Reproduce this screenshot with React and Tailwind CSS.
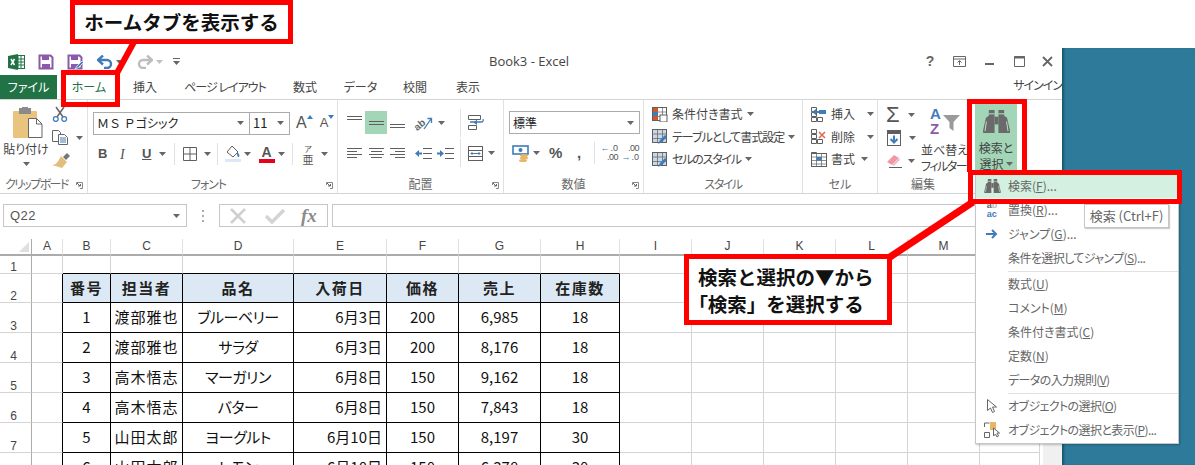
import React from 'react';

const GRAY = '#5f5f5f';
const BLUE = '#3f7cb8';

function Caret({ className = '' }) {
  return (
    <svg width="7" height="4" viewBox="0 0 7 4" className={`shrink-0 ${className}`}>
      <path d="M0 0h7L3.5 4z" fill="#666" />
    </svg>
  );
}

// ---- quick access + window icons
function ExcelLogo() {
  return (
    <svg width="17" height="16" viewBox="0 0 17 16">
      <rect x="7" y="1.5" width="9.5" height="13" fill="#fff" stroke="#217346" />
      <path d="M10 1.5v13M13 1.5v13M7 5h9.5M7 8h9.5M7 11h9.5" stroke="#217346" />
      <path d="M0 2l10-2v16L0 14z" fill="#217346" />
      <path d="M3 5l3.5 6M6.5 5L3 11" stroke="#fff" strokeWidth="1.5" />
    </svg>
  );
}

function SaveIcon({ pen }) {
  return (
    <svg width="16" height="16" viewBox="0 0 16 16">
      <path d="M1.5 1.5h11l2 2v11h-13z" fill="#fff" stroke="#8b5aa8" strokeWidth="2" />
      <rect x="4" y="2" width="7" height="4" fill="#8b5aa8" />
      <rect x="4" y="10" width="8" height="4" fill="#8b5aa8" />
      {pen && <path d="M8 15l2-3 5-5 1.5 1.5-5 5z" fill={BLUE} stroke="#fff" strokeWidth=".7" />}
    </svg>
  );
}

function UndoIcon({ color, flip }) {
  return (
    <svg width="16" height="14" viewBox="0 0 16 14" className={flip ? '-scale-x-100' : ''}>
      <path d="M2 5h8a4 4 0 0 1 0 8H7" fill="none" stroke={color} strokeWidth="2.4" />
      <path d="M6 0.5L1 5l5 4.5" fill="none" stroke={color} strokeWidth="2.4" />
    </svg>
  );
}

// ---- clipboard
function PasteIcon() {
  return (
    <svg width="30" height="31" viewBox="0 0 30 31" className="ml-[4px] shrink-0">
      <rect x="0" y="4" width="24" height="27" rx="1" fill="#e9c47f" />
      <rect x="6" y="1" width="12" height="6" fill="#8a8a8a" />
      <rect x="9" y="0" width="6" height="3" fill="#8a8a8a" />
      <path d="M15.5 11.5h8l5.5 5.5v13.5h-13.5z" fill="#fff" stroke="#666" />
      <path d="M23.5 11.5v5.5h5.5" fill="none" stroke="#666" />
    </svg>
  );
}

function ScissorsIcon() {
  return (
    <svg width="16" height="16" viewBox="0 0 16 16" className="shrink-0">
      <path d="M4 1l7 10M12 1L5 11" stroke="#666" strokeWidth="1.5" />
      <circle cx="3.8" cy="13" r="2.4" fill="none" stroke={BLUE} strokeWidth="1.3" />
      <circle cx="12.2" cy="13" r="2.4" fill="none" stroke={BLUE} strokeWidth="1.3" />
    </svg>
  );
}

function CopyIcon() {
  return (
    <svg width="16" height="15" viewBox="0 0 16 15" className="shrink-0">
      <path d="M.5.5h6l2 2v9H.5z" fill="#fff" stroke="#666" />
      <path d="M6.5 4.5h6l3 3v7h-9z" fill="#fff" stroke="#666" />
      <path d="M8 8h6M8 10h6M8 12h6" stroke={BLUE} />
    </svg>
  );
}

function BrushIcon() {
  return (
    <svg width="18" height="15" viewBox="0 0 18 15" className="shrink-0">
      <path d="M11 4l4-4 3 3-4 4z" fill="#777" />
      <path d="M9 3l6 6-5 6-10-3c4 0 6-3 9-9z" fill="#e3bd7c" />
    </svg>
  );
}

// ---- alignment
function Lines({ rows, w = 15, h = 13 }) {
  return (
    <svg width={w} height={h} viewBox={`0 0 ${w} ${h}`} className="shrink-0">
      {rows.map(([x, y, len, color]) => (
        <path key={`${x}-${y}`} d={`M${x} ${y + 0.5}h${len}`} stroke={color || GRAY} />
      ))}
    </svg>
  );
}

const alignLeft = [[0, 1, 15], [0, 4, 10], [0, 7, 15], [0, 10, 10]];
const alignCenter = [[0, 1, 15], [2, 4, 11], [0, 7, 15], [2, 10, 11]];
const alignRight = [[0, 1, 15], [5, 4, 10], [0, 7, 15], [5, 10, 10]];

function IndentIcon({ out }) {
  return (
    <svg width="17" height="11" viewBox="0 0 17 11" className="shrink-0">
      <path d="M8 .5h9M8 5.500h9M8 10.500h9" stroke={GRAY} />
      {out ? (
        <path d="M0 5.500L4 2v2.500h3v2H4V9z" fill={BLUE} />
      ) : (
        <path d="M7 5.500L3 2v2.500H0v2h3V9z" fill={BLUE} />
      )}
    </svg>
  );
}

function OrientIcon() {
  return (
    <svg width="18" height="16" viewBox="0 0 18 16" className="shrink-0 overflow-visible">
      <text x="-1" y="13" fontSize="10" fontWeight="700" fill="#666" transform="rotate(-40 5 10)" fontFamily="'Liberation Sans', sans-serif">ab</text>
      <path d="M9 14L16 4M12.500 3.500H16.500V8" fill="none" stroke={BLUE} strokeWidth="1.300" />
    </svg>
  );
}

function WrapIcon() {
  return (
    <svg width="17" height="15" viewBox="0 0 17 15" className="shrink-0">
      <path d="M.5.500h12v4H.5zM.5 10.500h8v4H.500z" fill="#fff" stroke={GRAY} />
      <path d="M2 7h11a2 2 0 0 0 2-3" fill="none" stroke={BLUE} strokeWidth="1.300" />
      <path d="M9 4.500L5.500 7.500 9 10z" fill={BLUE} />
    </svg>
  );
}

function MergeIcon() {
  return (
    <svg width="15" height="15" viewBox="0 0 15 15" className="shrink-0">
      <rect x=".5" y=".5" width="14" height="14" fill="#fff" stroke={GRAY} />
      <path d="M.5 4.500h14M.5 10.500h14" stroke={GRAY} />
      <path d="M3 7.500h9M4.500 6L3 7.500 4.500 9M10.500 6L12 7.500 10.500 9" fill="none" stroke={BLUE} />
    </svg>
  );
}

// ---- number
function CurrencyIcon() {
  return (
    <svg width="17" height="17" viewBox="0 0 17 17" className="shrink-0">
      <rect x="1" y="1" width="15" height="8" fill="#fff" stroke={BLUE} strokeWidth="1.600" />
      <circle cx="8.500" cy="5" r="2" fill={BLUE} />
      <ellipse cx="12" cy="10.500" rx="4" ry="1.500" fill="#e9b566" />
      <ellipse cx="12" cy="13" rx="4" ry="1.500" fill="#e9b566" />
      <ellipse cx="11" cy="15.500" rx="4" ry="1.500" fill="#e9b566" />
    </svg>
  );
}

function DecimalIcon({ more }) {
  return (
    <div className="w-[16px] text-[9px] leading-[9px] font-['Liberation_Sans',sans-serif] text-[#555]">
      {more ? (
        <>
          <div className="text-right tracking-[-0.5px]">.00</div>
          <div className="flex items-center justify-end gap-[1px]"><span className="text-[#3f7cb8] font-bold">→</span><span>.0</span></div>
        </>
      ) : (
        <>
          <div className="flex items-center justify-end gap-[1px]"><span className="text-[#3f7cb8] font-bold">←</span><span>.0</span></div>
          <div className="text-right tracking-[-0.5px]">.00</div>
        </>
      )}
    </div>
  );
}

// ---- styles
function StyleIcon({ kind }) {
  return (
    <svg width="16" height="15" viewBox="0 0 16 15" className="shrink-0">
      <rect x=".5" y=".5" width="14" height="13" fill={kind === 'cond' ? '#fff' : '#c9d6e6'} stroke={GRAY} />
      <path d="M5.500.5v13M10.500.5v13M.5 5h14M.5 9.500h14" stroke={GRAY} strokeWidth=".7" />
      {kind === 'cond' && <path d="M1 1h5v4H1z" fill="#d0562c" />}
      {kind === 'cond' && <path d="M1 9h5v4H1z" fill="#d0562c" />}
      {kind === 'cond' && <path d="M1 5h5v4H1z" fill={BLUE} />}
      {kind === 'cond' && <rect x="8" y="8" width="7" height="7" fill="#fff" stroke={GRAY} />}
      {kind !== 'cond' && <path d="M6 15l2-4 5-5 2 2-5 5z" fill={BLUE} />}
    </svg>
  );
}

// ---- cells
function CellsIcon({ kind }) {
  return (
    <svg width="16" height="15" viewBox="0 0 16 15" className="shrink-0">
      <path d="M.5.500h5v4h-5zM.5 5.500h5v4h-5zM.5 10.500h5v4h-5zM6.500 10.500h5v4h-5z" fill="#fff" stroke={GRAY} />
      {kind === 'ins' && <path d="M1 5l4-3v2h3V3h7v4H8V6H5v2z" fill={BLUE} />}
      {kind === 'del' && <path d="M8 3l6 6M14 3L8 9" stroke="#e0664d" strokeWidth="1.500" />}
      {kind === 'fmt' && (
        <>
          <rect x=".5" y="1.500" width="15" height="13" fill="#fff" stroke={GRAY} />
          <path d="M.5 5h15M.5 8.500h15M.5 12h15M5.500 1.500v13M10.500 1.500v13" stroke={GRAY} strokeWidth=".7" />
          <rect x="5.500" y="5" width="5" height="3.500" fill={BLUE} />
        </>
      )}
    </svg>
  );
}

function FillIcon() {
  return (
    <svg width="14" height="16" viewBox="0 0 14 16" className="shrink-0">
      <rect x=".5" y=".5" width="13" height="15" fill="#fff" stroke={GRAY} />
      <rect x="1" y="1" width="12" height="3" fill={GRAY} />
      <path d="M7 5.500v7M3.500 9L7 12.500 10.500 9" fill="none" stroke={BLUE} strokeWidth="2" />
    </svg>
  );
}

function EraserIcon() {
  return (
    <svg width="15" height="14" viewBox="0 0 15 14" className="shrink-0">
      <path d="M0 8l7-7 5 3-7 7z" fill="#ee9aa6" />
      <path d="M5 11l7-7 1 2-6 6z" fill="#f3bfc6" />
      <path d="M2 13.500h13" stroke={GRAY} />
    </svg>
  );
}

function SortIcon() {
  return (
    <svg width="31" height="28" viewBox="0 0 31 28" className="shrink-0 overflow-visible">
      <text x="0" y="12" fontSize="15" fontWeight="700" fill={BLUE} fontFamily="'Liberation Sans', sans-serif">A</text>
      <text x="0" y="27" fontSize="15" fontWeight="700" fill="#8b5aa8" fontFamily="'Liberation Sans', sans-serif">Z</text>
      <path d="M13 8h17l-6.500 7v9l-4-3v-6z" fill="#9a9a9a" />
    </svg>
  );
}

// two barrels joined by a short bridge
function Binoculars({ w, h, light = '#c3e2cf' }) {
  return (
    <svg width={w} height={h} viewBox="0 0 28 24" className="shrink-0">
      <path d="M6 0h6v6l0 18H0V21L3 8l3-2zM16 0h6v6l3 2 3 13v3H16z" fill="#6a6a6a" />
      <rect x="12" y="7" width="4" height="8" fill="#6a6a6a" />
      <path d="M3.500 12L2 22M24.500 12L26 22M6 4h6M16 4h6" stroke={light} strokeWidth="1" />
    </svg>
  );
}

// ---- formula bar
function FxButtons() {
  return (
    <div className="ml-[15px] w-[109px] h-[23px] border border-[#c6c6c6] flex items-center pl-[9px]">
      <svg width="18" height="16" viewBox="0 0 18 16" className="shrink-0">
        <path d="M2 1l14 14M16 1L2 15" stroke="#cfcfcf" strokeWidth="2.500" />
      </svg>
      <svg width="20" height="16" viewBox="0 0 20 16" className="ml-[18px] shrink-0">
        <path d="M1 8l6 6L19 2" fill="none" stroke="#d4d4d4" strokeWidth="3.500" />
      </svg>
      <span className="ml-[16px] text-[19px] leading-none italic font-bold text-[#8c8c8c] font-['Liberation_Serif',serif]">fx</span>
    </div>
  );
}

function Launcher() {
  return (
    <svg width="7" height="7" viewBox="0 0 7 7" className="shrink-0">
      <path d="M.5 3V.5h6v6H4" fill="none" stroke="#888" />
      <path d="M1 1l3 3M2 4h2.500V2" fill="none" stroke="#666" />
    </svg>
  );
}

function Group({ label, launcher, className, labelClass = 'justify-center', children }) {
  return (
    <div className={`relative shrink-0 h-[93px] flex flex-col ${className}`}>
      <div className="flex-1 min-h-0">{children}</div>
      <div className={`h-[18px] flex items-center text-[12px] leading-none text-[#6a6a6a] pb-[1px] whitespace-nowrap ${labelClass}`}>
        {label}
        {launcher && <span className="absolute right-[4px] bottom-[4px] flex"><Launcher /></span>}
      </div>
    </div>
  );
}

function StyleRow({ icon, text, tight = '' }) {
  return (
    <div className="h-[22.5px] flex items-center gap-[4px] text-[12px] text-[#444] whitespace-nowrap">
      {icon}
      <span className={tight}>{text}</span>
      <Caret />
    </div>
  );
}

function Ribbon() {
  return (
    <div className="h-[94px] border-b border-[#d4d4d4] flex text-[#444] [font-feature-settings:'palt']">
      {/* クリップボード */}
      <Group label="クリップボード" launcher labelClass="pl-[5px] tracking-[-1.6px]" className="w-[88px] border-r border-[#e1e1e1]">
        <div className="flex">
          <div className="w-[52px] shrink-0 flex flex-col items-center pt-[7px]">
            <PasteIcon />
            <div className="text-[12px] leading-[16px] mt-[3px] whitespace-nowrap">貼り付け</div>
            <Caret className="mt-[5px]" />
          </div>
          <div className="flex flex-col pt-[6px] gap-[8px]">
            <ScissorsIcon />
            <div className="flex items-center gap-[8px]"><CopyIcon /><Caret /></div>
            <BrushIcon />
          </div>
        </div>
      </Group>

      {/* フォント */}
      <Group label="フォント" launcher labelClass="justify-center tracking-[-1px] pr-[8px]" className="w-[250px] border-r border-[#e1e1e1]">
        <div className="pl-[5px] pt-[11px]">
          <div className="flex items-center">
            <div className="w-[157px] h-[23px] border border-[#ababab] flex items-center justify-between pl-[3px] pr-[5px] text-[12px] text-[#222]">
              <span><span className="[font-feature-settings:normal]">ＭＳ Ｐ</span>ゴシック</span>
              <Caret />
            </div>
            <div className="w-[40px] h-[23px] border border-l-0 border-[#ababab] flex items-center justify-between pl-[3px] pr-[5px] text-[13px] text-[#222]">
              <span>11</span>
              <Caret />
            </div>
            <span className="ml-[6px] text-[16px] font-['Liberation_Sans',sans-serif] text-[#555]">A</span>
            <svg width="6" height="4" viewBox="0 0 6 4" className="-mt-[12px]"><path d="M0 4l3-4 3 4z" fill={BLUE} /></svg>
            <span className="ml-[7px] text-[13px] font-['Liberation_Sans',sans-serif] text-[#555]">A</span>
            <svg width="6" height="4" viewBox="0 0 6 4" className="-mt-[12px]"><path d="M0 0l3 4 3-4z" fill={BLUE} /></svg>
          </div>
          <div className="flex items-center h-[24px] mt-[7px] pl-[5px] text-[#555] font-['Liberation_Sans',sans-serif]">
            <span className="w-[22px] text-[13px] font-bold">B</span>
            <span className="w-[22px] text-[14px] italic font-['Liberation_Serif',serif]">I</span>
            <span className="w-[17px] text-[13px] font-bold underline">U</span>
            <Caret />
            <div className="ml-[8px] mr-[8px] w-px h-[22px] bg-[#e1e1e1]" />
            <svg width="14" height="14" viewBox="0 0 14 14" className="shrink-0"><path d="M.5.500h13v13H.5zM7 .5v13M.5 7h13" fill="none" stroke={GRAY} /></svg>
            <Caret className="ml-[7px]" />
            <div className="ml-[6px] mr-[7px] w-px h-[22px] bg-[#e1e1e1]" />
            <svg width="16" height="16" viewBox="0 0 16 16" className="shrink-0">
              <path d="M7 0l6 6-5 5-6-5z" fill="#fff" stroke={GRAY} />
              <path d="M12 6c2 2 3 3 2 5-2 0-2-2-2-5z" fill={BLUE} />
              <rect x="0" y="13" width="16" height="3" fill="#dbe8f5" />
            </svg>
            <Caret className="ml-[3px]" />
            <div className="w-[17px] ml-[7px] flex flex-col items-center">
              <span className="text-[14px] leading-[13px] font-bold text-[#555]">A</span>
              <div className="w-[16px] h-[4px] bg-[#e8001c]" />
            </div>
            <Caret className="ml-[3px]" />
            <div className="ml-[7px] mr-[8px] w-px h-[22px] bg-[#e1e1e1]" />
            <div className="w-[14px] flex flex-col items-center text-[8px] leading-[9px] font-['Noto_Sans_CJK_JP',sans-serif] text-[#555]">
              <span>ア</span>
              <span className="text-[11px] leading-[12px]">亜</span>
            </div>
            <Caret className="ml-[6px]" />
          </div>
        </div>
      </Group>

      {/* 配置 */}
      <Group label="配置" launcher className="w-[166px] border-r border-[#e1e1e1]">
        <div className="pl-[9px] pt-[11px]">
          <div className="flex items-center h-[23px]">
            <div className="w-[15px] -mt-[9px] flex"><Lines rows={[[0, 1, 15], [0, 4, 15]]} h={7} /></div>
            <div className="w-[22px] h-[23px] ml-[3px] bg-[#a3d5b7] flex items-center justify-center"><Lines rows={[[0, 3, 15], [0, 6, 15]]} h={10} /></div>
            <div className="w-[15px] ml-[3px] mt-[8px] flex"><Lines rows={[[0, 1, 15], [0, 4, 15]]} h={7} /></div>
            <div className="ml-[10px] flex items-center gap-[5px]"><OrientIcon /><Caret /></div>
            <div className="ml-[15px] w-px h-[28px] bg-[#e1e1e1]" />
            <div className="ml-[7px] flex"><WrapIcon /></div>
          </div>
          <div className="flex items-center h-[24px] mt-[7px]">
            <Lines rows={alignLeft} />
            <div className="ml-[7px] flex"><Lines rows={alignCenter} /></div>
            <div className="ml-[6px] flex"><Lines rows={alignRight} /></div>
            <div className="ml-[10px] flex"><IndentIcon out /></div>
            <div className="ml-[5px] flex"><IndentIcon /></div>
            <div className="ml-[6px] w-px h-[28px] bg-[#e1e1e1]" />
            <div className="ml-[7px] flex"><MergeIcon /></div>
            <Caret className="ml-[5px]" />
          </div>
        </div>
      </Group>

      {/* 数値 */}
      <Group label="数値" launcher className="w-[140px] border-r border-[#e1e1e1]">
        <div className="pl-[5px] pt-[11px]">
          <div className="w-[131px] h-[23px] border border-[#ababab] flex items-center justify-between pl-[3px] pr-[5px] text-[12px] text-[#222]">
            <span>標準</span>
            <Caret />
          </div>
          <div className="flex items-center h-[24px] mt-[7px] pl-[3px]">
            <CurrencyIcon />
            <Caret className="ml-[4px]" />
            <span className="ml-[9px] w-[15px] text-[15px] font-bold font-['Liberation_Sans',sans-serif] text-[#555]">%</span>
            <span className="ml-[13px] w-[6px] text-[15px] font-bold font-['Liberation_Sans',sans-serif] text-[#555]">,</span>
            <div className="ml-[11px] w-px h-[22px] bg-[#e1e1e1]" />
            <div className="ml-[7px] flex"><DecimalIcon /></div>
            <div className="ml-[5px] flex"><DecimalIcon more /></div>
          </div>
        </div>
      </Group>

      {/* スタイル */}
      <Group label="スタイル" labelClass="justify-center tracking-[-1.5px]" className="w-[159px] border-r border-[#e1e1e1]">
        <div className="pl-[8px] pt-[3px]">
          <StyleRow icon={<StyleIcon kind="cond" />} text="条件付き書式" />
          <StyleRow icon={<StyleIcon />} text="テーブルとして書式設定" tight="tracking-[-1px]" />
          <StyleRow icon={<StyleIcon />} text="セルのスタイル" tight="tracking-[-1.2px]" />
        </div>
      </Group>

      {/* セル */}
      <Group label="セル" className="w-[75px] border-r border-[#e1e1e1]">
        <div className="pl-[8px] pt-[3px]">
          <StyleRow icon={<CellsIcon kind="ins" />} text={<span className="inline-block w-[32px]">挿入</span>} />
          <StyleRow icon={<CellsIcon kind="del" />} text={<span className="inline-block w-[32px]">削除</span>} />
          <StyleRow icon={<CellsIcon kind="fmt" />} text={<span className="inline-block w-[26px]">書式</span>} />
        </div>
      </Group>

      {/* 編集 */}
      <Group label="編集" className="w-[92px] pr-[2px]">
        <div className="flex pl-[8px] pt-[3px]">
          <div className="w-[34px] shrink-0">
            <div className="h-[23px] flex items-center gap-[5px]">
              <span className="w-[17px] text-[22px] leading-none font-['Liberation_Sans',sans-serif] text-[#555]">Σ</span>
              <Caret />
            </div>
            <div className="h-[23px] flex items-center gap-[8px] pl-[1px]"><FillIcon /><Caret /></div>
            <div className="h-[23px] flex items-center gap-[6px] pl-[1px]"><EraserIcon /><Caret /></div>
          </div>
          <div className="w-[50px] flex flex-col items-start overflow-hidden whitespace-nowrap text-[12px] leading-[16px] pl-[1px]">
            <div className="mt-[4px] ml-[9px] flex"><SortIcon /></div>
            <div className="mt-[7px]">並べ替えと</div>
            <div className="tracking-[-1.5px]">フィルター</div>
          </div>
        </div>
      </Group>

      {/* 検索と選択 */}
      <div className="ml-[5px] w-[42px] h-[72px] bg-[#a3d5b7] flex flex-col items-center pt-[10px] text-[12px] leading-[16px] whitespace-nowrap">
        <Binoculars w={27} h={23} />
        <div className="mt-[7px]">検索と</div>
        <div className="flex items-center gap-[2px]">選択<Caret /></div>
      </div>
    </div>
  );
}

const COLS = ['A', 'B', 'C', 'D', 'E', 'F', 'G', 'H', 'I', 'J', 'K', 'L', 'M', 'N'];

const TABLE = [
  ['番号', '担当者', '品名', '入荷日', '価格', '売上', '在庫数'],
  ['1', '渡部雅也', 'ブルーベリー', '6月3日', '200', '6,985', '18'],
  ['2', '渡部雅也', 'サラダ', '6月3日', '200', '8,176', '18'],
  ['3', '高木悟志', 'マーガリン', '6月8日', '150', '9,162', '18'],
  ['4', '高木悟志', 'バター', '6月8日', '150', '7,843', '18'],
  ['5', '山田太郎', 'ヨーグルト', '6月10日', '150', '8,197', '30'],
  ['6', '山田太郎', 'レモン', '6月10日', '150', '6,378', '30'],
];

function Sheet() {
  const rows = [1, 2, 3, 4, 5, 6, 7, 8, 9];
  return (
    <div className="flex flex-1 min-h-0 overflow-hidden">
      <div className="w-[1040px] shrink-0 grid grid-cols-[32px_31px_48px_72px_111px_93px_72px_82px_79px_72px_72px_72px_72px_72px_60px] grid-rows-[17px_18px_29px_30px_30px_30px_30px_30px_30px] text-[#222]">
        {/* 列見出し */}
        <div className="border-r border-b-2 border-r-[#ababab] border-b-[#ababab] flex items-end justify-end pr-[2px] pb-[2px]">
          <svg width="10" height="10" viewBox="0 0 10 10"><path d="M10 0v10H0z" fill="#dfdfdf" /></svg>
        </div>
        {COLS.map(c => (
          <div key={c} className="border-r border-b-2 border-r-[#e1e1e1] border-b-[#ababab] flex items-center justify-center pb-[1px] text-[12px] leading-none text-[#444] font-['Liberation_Sans',sans-serif]">
            {c}
          </div>
        ))}

        {rows.map(r => {
          const data = TABLE[r - 2];
          return (
            <React.Fragment key={r}>
              <div className="border-r border-b border-r-[#ababab] border-b-[#d4d4d4] flex items-end justify-center pr-[4px] text-[12px] leading-[12px] text-[#444] font-['Liberation_Sans',sans-serif]">
                {r}
              </div>
              {COLS.map((c, i) => {
                const cellData = data && i >= 1 && i <= 7 ? data[i - 1] : null;
                if (cellData !== null) {
                  const isHead = r === 2;
                  const isDate = i === 4 && !isHead;
                  return (
                    <div
                      key={c}
                      className={`border-r border-b border-black flex items-center pb-[2px] text-[15px] leading-none whitespace-nowrap ${isHead ? 'bg-[#dce9f5] font-bold tracking-[1.5px] justify-center' : 'text-[#111]'} ${isDate ? 'justify-end pr-[4px]' : 'justify-center'} ${!isHead && i === 2 ? 'tracking-[1px]' : ''} ${!isHead && i === 3 ? "tracking-[-0.5px] [font-feature-settings:'palt']" : ''}`}
                    >
                      {cellData}
                    </div>
                  );
                }
                if (i === 0 && data) {
                  return <div key={c} className="border-r border-b border-r-black border-b-[#d4d4d4]" />;
                }
                if (r === 1 && i >= 1 && i <= 7) {
                  return <div key={c} className="border-r border-b border-r-[#d4d4d4] border-b-black" />;
                }
                return <div key={c} className="border-r border-b border-[#d4d4d4]" />;
              })}
            </React.Fragment>
          );
        })}
      </div>
      <div className="flex-1 bg-[#f0f0f0] ml-[3px]" />
    </div>
  );
}

function MenuItem({ icon, children, active, tight }) {
  return (
    <div className={`h-[24px] flex items-center text-[12px] text-[#666] whitespace-nowrap ${active ? 'bg-[#d3f0e0]' : ''}`}>
      <div className="w-[32px] shrink-0 flex items-center justify-center">{icon}</div>
      <span className={tight ? 'tracking-[-0.6px]' : ''}>{children}</span>
    </div>
  );
}

function FindMenu() {
  return (
    <div className="absolute left-[975px] top-[172px] w-[204px] h-[272px] bg-white border border-[#c6c6c6] shadow-[1px_1px_2px_rgba(0,0,0,0.25)] pt-[1px] [font-feature-settings:'palt']">
      <MenuItem active icon={<Binoculars w={17} h={14} light="#d3f0e0" />}>検索(<u>F</u>)...</MenuItem>
      <MenuItem icon={
        <div className="text-[9px] leading-[9px] font-bold font-['Liberation_Sans',sans-serif] text-[#3f7cb8]">
          <div className="text-[#666]">a<span className="text-[#bbb]">b</span></div>
          <div>ac</div>
        </div>
      }>置換(<u>R</u>)...</MenuItem>
      <MenuItem icon={<svg width="12" height="10" viewBox="0 0 12 10"><path d="M0 5h10M6 1l4 4-4 4" fill="none" stroke={BLUE} strokeWidth="2" /></svg>}>ジャンプ(<u>G</u>)...</MenuItem>
      <MenuItem tight>条件を選択してジャンプ(<u>S</u>)...</MenuItem>
      <div className="ml-[32px] h-[1px] my-[0.5px] bg-[#e1e1e1]" />
      <MenuItem>数式(<u>U</u>)</MenuItem>
      <MenuItem>コメント(<u>M</u>)</MenuItem>
      <MenuItem>条件付き書式(<u>C</u>)</MenuItem>
      <MenuItem>定数(<u>N</u>)</MenuItem>
      <MenuItem tight>データの入力規則(<u>V</u>)</MenuItem>
      <div className="ml-[32px] h-[1px] my-[0.5px] bg-[#e1e1e1]" />
      <MenuItem tight icon={<svg width="10" height="14" viewBox="0 0 10 14"><path d="M.5.500v11l3-2.500 2 4.500 2-1-2-4.500h4z" fill="#fff" stroke="#666" /></svg>}>オブジェクトの選択(<u>O</u>)</MenuItem>
      <MenuItem tight icon={
        <svg width="16" height="16" viewBox="0 0 16 16">
          <path d="M.5 1h5M.5 1v4M.5 10.500h5v5h-5z" fill="none" stroke="#666" />
          <rect x="6" y="0" width="6" height="8" fill="#e9b566" />
          <path d="M9.500 6v8l2-2 1.500 3 1.500-1-1.500-3h2.500z" fill="#fff" stroke="#666" />
        </svg>
      }>オブジェクトの選択と表示(<u>P</u>)...</MenuItem>
    </div>
  );
}

export default function App() {
  return (
    <div className="relative w-[1195px] h-[465px] overflow-hidden bg-white font-['Noto_Sans_CJK_JP',sans-serif]">
      <div className="flex h-[465px] pt-[48px]">
        <div className="w-[1062px] shrink-0 flex flex-col">
          {/* タイトルバー */}
          <div className="h-[27px] shrink-0 flex items-center relative">
            <div className="w-[489px] shrink-0 flex items-center pl-[8px]">
              <ExcelLogo />
              <div className="ml-[13px] flex"><SaveIcon /></div>
              <div className="ml-[13px] flex"><SaveIcon pen /></div>
              <div className="ml-[14px] flex"><UndoIcon color={BLUE} /></div>
              <Caret className="ml-[3px]" />
              <div className="ml-[14px] flex"><UndoIcon color="#bdbdbd" flip /></div>
              <Caret className="ml-[3px] opacity-40" />
              <svg width="7" height="7" viewBox="0 0 7 7" className="ml-[10px]"><path d="M0 .5h7" stroke="#666" /><path d="M0 3h7L3.500 7z" fill="#666" /></svg>
            </div>
            <span className="flex-1 text-[13px] text-[#444] font-['Open_Sans',sans-serif]">Book3 - Excel</span>
            <div className="flex items-center text-[#666]">
              <span className="w-[30px] text-center text-[14px] font-bold font-['Liberation_Sans',sans-serif]">?</span>
              <svg width="30" height="11" viewBox="0 0 30 11"><path d="M8.500.5h12v10h-12zM8.500 3h12M14.500 9V5M12.500 6.500l2-2 2 2" fill="none" stroke="#666" /></svg>
              <svg width="30" height="11" viewBox="0 0 30 11"><path d="M10 8h9" stroke="#666" strokeWidth="2" /></svg>
              <svg width="28" height="11" viewBox="0 0 28 11"><path d="M9.500.500h10v10h-10z" fill="none" stroke="#666" /><path d="M9 1.500h11" stroke="#666" strokeWidth="2" /></svg>
              <svg width="28" height="11" viewBox="0 0 28 11" className="mr-[1px]"><path d="M10 1l9 9M19 1l-9 9" stroke="#666" strokeWidth="1.800" /></svg>
            </div>
          </div>

          {/* タブ */}
          <div className="h-[25px] shrink-0 border-b border-[#d4d4d4] flex text-[12px] text-[#444] whitespace-nowrap [font-feature-settings:'palt']">
            <div className="w-[57px] bg-[#217346] text-white flex items-center justify-center">ファイル</div>
            <div className="w-[64px] text-[#217346] flex items-center justify-center">ホーム</div>
            <div className="w-[48px] flex items-center justify-center">挿入</div>
            <div className="w-[112px] flex items-center justify-center tracking-[-1px]">ページ レイアウト</div>
            <div className="w-[48px] flex items-center justify-center">数式</div>
            <div className="w-[63px] flex items-center justify-center">データ</div>
            <div className="w-[46px] flex items-center justify-center">校閲</div>
            <div className="w-[60px] flex items-center justify-center">表示</div>
            <div className="flex-1 flex items-center justify-end overflow-hidden -mt-[4px] tracking-[-1px]">サインイン</div>
          </div>

          <Ribbon />

          {/* 数式バー */}
          <div className="h-[45px] shrink-0 flex items-start pt-[10px] pl-[3px]">
            <div className="w-[184px] h-[23px] border border-[#c6c6c6] flex items-center justify-between pl-[6px] pr-[6px] text-[13px] text-[#555] font-['Liberation_Sans',sans-serif] tracking-[0.5px]">
              Q22
              <Caret />
            </div>
            <div className="ml-[15px] h-[23px] flex flex-col justify-center gap-[3px]">
              <span className="w-[2px] h-[2px] bg-[#aaa]" />
              <span className="w-[2px] h-[2px] bg-[#aaa]" />
              <span className="w-[2px] h-[2px] bg-[#aaa]" />
            </div>
            <FxButtons />
            <div className="ml-[4px] w-[709px] h-[23px] border border-[#c6c6c6]" />
          </div>

          <Sheet />
        </div>
        <div className="flex-1 bg-[#2d7a9a] shadow-[inset_3px_0_2px_-1px_rgba(0,60,60,0.5)]" />
      </div>

      <FindMenu />

      {/* ツールチップ */}
      <div className="absolute left-[1084px] top-[204px] w-[85px] h-[24px] bg-white border border-[#c6c6c6] shadow-[1px_1px_1px_rgba(0,0,0,0.2)] flex items-center justify-center text-[13px] text-[#666] whitespace-nowrap [font-feature-settings:'palt']">
        検索 (Ctrl+F)
      </div>

      {/* 注釈 */}
      <svg width="1195" height="465" viewBox="0 0 1195 465" className="absolute inset-0 pointer-events-none">
        <path d="M134 42L117 73" stroke="#ff0000" strokeWidth="6" />
        <path d="M890 257L973 202" stroke="#ff0000" strokeWidth="7" />
      </svg>
      <div className="absolute left-[70px] top-0 w-[223px] h-[44px] border-[5px] border-[#ff0000] bg-white flex items-center justify-center text-[19.5px] font-bold text-[#111] whitespace-nowrap">
        ホームタブを表示する
      </div>
      <div className="absolute left-[61px] top-[70px] w-[59px] h-[37px] border-[5px] border-[#ff0000]" />
      <div className="absolute left-[967px] top-[99px] w-[60px] h-[73px] border-[5px] border-b-0 border-[#ff0000]" />
      <div className="absolute left-[968px] top-[170px] w-[214px] h-[34px] border-[5px] border-[#ff0000]" />
      <div className="absolute left-[684px] top-[254px] w-[208px] h-[71px] border-[5px] border-[#ff0000] bg-white flex flex-col justify-center pl-[9px] text-[19.5px] leading-[27px] font-bold text-[#111] whitespace-nowrap">
        <div>検索と選択の▼から</div>
        <div><span className="[font-feature-settings:'palt']">「</span>検索」を選択する</div>
      </div>
    </div>
  );
}
